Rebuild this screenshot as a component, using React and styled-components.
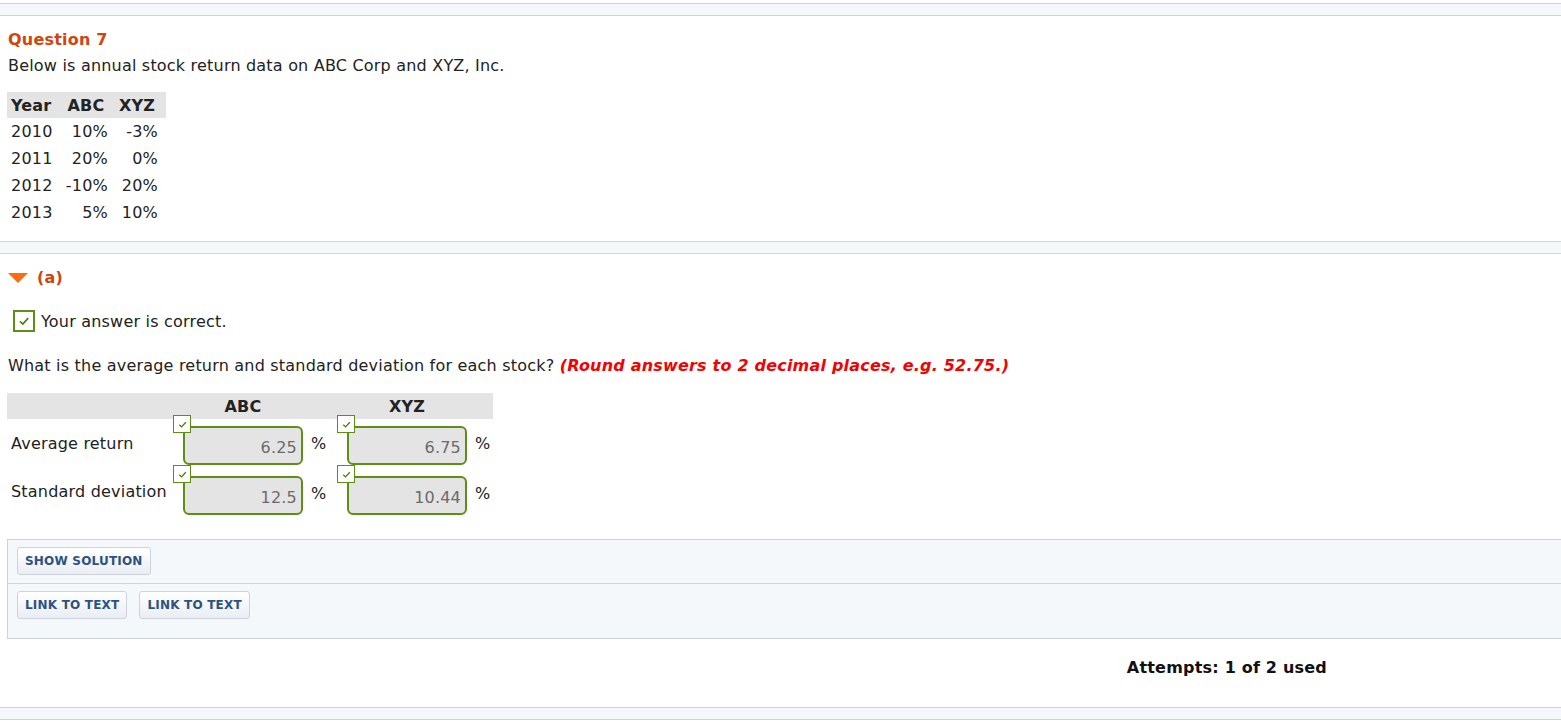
import React from 'react'
import styled, { createGlobalStyle } from 'styled-components'

const Global = createGlobalStyle`
  body {
    margin: 0;
    background: #fff;
    font-family: Verdana, "DejaVu Sans", sans-serif;
    letter-spacing: 0.2px;
    color: #222;
  }
`

const Page = styled.div`
  width: 1561px;
  overflow: hidden;
  padding-top: 3px;
`

const Strip = styled.div`
  height: 11px;
  background: #f5f8fb;
  border-top: 1px solid #cfd4dc;
  border-bottom: 1px solid #cfd4dc;
`

const Section = styled.section`
  padding: ${p => p.$pad || '0 8px'};
`

const QTitle = styled.h2`
  margin: 0;
  font-size: 16px;
  line-height: 20px;
  font-weight: bold;
  color: #d2450f;
`

const Text = styled.p`
  margin: ${p => p.$m || '0'};
  font-size: 16px;
  line-height: 20px;
`

const Hint = styled.em`
  font-weight: bold;
  color: #f50000;
`

const DataTable = styled.table`
  border-collapse: collapse;
  margin: 16px 0 0 -1px;
  font-size: 16px;
  th {
    background: #e4e4e4;
    height: 26px;
    padding: 0 4px;
    text-align: center;
    font-weight: bold;
  }
  th:first-child { text-align: left; width: 45px; }
  th:nth-child(2) { width: 44px; }
  th:last-child { padding-right: 8px; width: 42px; }
  td {
    height: 27px;
    padding: 0 4px;
    text-align: right;
  }
  td:first-child { text-align: left; }
  td:last-child { padding-right: 8px; }
`

const PartHead = styled.div`
  display: flex;
  align-items: center;
  gap: 9px;
  height: 20px;
  margin-top: 13px;
  font-size: 16px;
  font-weight: bold;
  color: #d2450f;
`

const Triangle = styled.span`
  width: 0;
  height: 0;
  border-left: 10px solid transparent;
  border-right: 10px solid transparent;
  border-top: 10px solid #ff6a13;
  margin-top: 2px;
`

const Correct = styled.div`
  display: flex;
  align-items: center;
  gap: 6px;
  margin: 23px 0 0 5px;
  font-size: 16px;
`

const CheckBox = styled.span`
  box-sizing: border-box;
  width: ${p => p.$size}px;
  height: ${p => p.$size}px;
  border: ${p => (p.$size > 20 ? 2 : 1)}px solid #5f8e14;
  background: #fff;
  display: flex;
  align-items: center;
  justify-content: center;
`

const AnswerTable = styled.div`
  margin-top: 17px;
  width: 486px;
  margin-left: -1px;
`

const AnswerHead = styled.div`
  display: grid;
  grid-template-columns: 176px 164px 146px;
  height: 26px;
  align-items: center;
  background: #e4e4e4;
  font-size: 16px;
  font-weight: bold;
  span { text-align: center; }
  span:nth-child(2) { width: 120px; }
  span:nth-child(3) { width: 120px; }
`

const AnswerRow = styled.div`
  display: grid;
  grid-template-columns: 176px 164px 146px;
  height: ${p => p.$h || 50}px;
  align-items: end;
  font-size: 16px;
`

const Label = styled.span`
  padding-left: 4px;
  align-self: center;
  margin-top: ${p => p.$mt || 0}px;
`

const Field = styled.div`
  display: flex;
  align-items: center;
  gap: 8px;
  position: relative;
`

const Input = styled.div`
  box-sizing: border-box;
  width: 120px;
  height: 39px;
  border: 2px solid #5f8e14;
  border-radius: 6px;
  background: #e4e4e4;
  color: #6b6b6b;
  font-size: 16px;
  display: flex;
  align-items: center;
  justify-content: flex-end;
  padding: 4px 4px 0 0;
`

const Unit = styled.span`
  margin-bottom: 4px;
`

const Badge = styled.div`
  position: absolute;
  left: -10px;
  top: -11px;
`

const ToolBox = styled.div`
  margin: 24px 0 0 7px;
  border: 1px solid #ccd3df;
  border-right: none;
  background: #f5f8fb;
`

const ToolRow = styled.div`
  display: flex;
  gap: 12px;
  padding: 7px 9px ${p => p.$pb || 8}px;
  & + & { border-top: 1px solid #ccd3df; }
`

const Button = styled.button`
  height: 28px;
  padding: 0 7px;
  border: 1px solid #ccd3df;
  border-radius: 3px;
  background: linear-gradient(#ffffff, #e9eef4);
  color: #2c5282;
  font-family: Verdana, "DejaVu Sans", sans-serif;
  font-size: 12px;
  font-weight: bold;
  letter-spacing: 0.2px;
`

const Attempts = styled.div`
  display: flex;
  justify-content: flex-end;
  padding: 19px 234px 0 0;
  height: 49px;
  font-size: 16px;
  line-height: 20px;
  font-weight: bold;
  color: #111;
`

const Tick = ({ s }) => (
  <svg width={s} height={s} viewBox="0 0 12 12">
    <path d="M2.5 6.3 L5 8.6 L9.6 3.6" fill="none" stroke="#4f7f10" strokeWidth="1.5" />
  </svg>
)

const AnswerField = ({ value }) => (
  <Field>
    <Badge>
      <CheckBox $size={18}><Tick s={11} /></CheckBox>
    </Badge>
    <Input>{value}</Input>
    <Unit>%</Unit>
  </Field>
)

const rows = [
  ['2010', '10%', '-3%'],
  ['2011', '20%', '0%'],
  ['2012', '-10%', '20%'],
  ['2013', '5%', '10%'],
]

export default function App() {
  return (
    <Page>
      <Global />
      <Strip />
      <Section $pad="14px 8px 15px">
        <QTitle>Question 7</QTitle>
        <Text $m="6px 0 0">Below is annual stock return data on ABC Corp and XYZ, Inc.</Text>
        <DataTable>
          <thead>
            <tr><th>Year</th><th>ABC</th><th>XYZ</th></tr>
          </thead>
          <tbody>
            {rows.map(r => (
              <tr key={r[0]}>{r.map((c, i) => <td key={i}>{c}</td>)}</tr>
            ))}
          </tbody>
        </DataTable>
      </Section>
      <Strip />
      <Section>
        <PartHead><Triangle />(a)</PartHead>
        <Correct>
          <CheckBox $size={22}><Tick s={14} /></CheckBox>
          Your answer is correct.
        </Correct>
        <Text $m="24px 0 0">
          What is the average return and standard deviation for each stock?{' '}
          <Hint>(Round answers to 2 decimal places, e.g. 52.75.)</Hint>
        </Text>
        <AnswerTable>
          <AnswerHead><span /><span>ABC</span><span>XYZ</span></AnswerHead>
          <AnswerRow $h={46}>
            <Label $mt={2}>Average return</Label>
            <AnswerField value="6.25" />
            <AnswerField value="6.75" />
          </AnswerRow>
          <AnswerRow>
            <Label $mt={2}>Standard deviation</Label>
            <AnswerField value="12.5" />
            <AnswerField value="10.44" />
          </AnswerRow>
        </AnswerTable>
      </Section>
      <ToolBox>
        <ToolRow>
          <Button>SHOW SOLUTION</Button>
        </ToolRow>
        <ToolRow $pb={19}>
          <Button>LINK TO TEXT</Button>
          <Button>LINK TO TEXT</Button>
        </ToolRow>
      </ToolBox>
      <Attempts>Attempts: 1 of 2 used</Attempts>
      <Strip />
    </Page>
  )
}
